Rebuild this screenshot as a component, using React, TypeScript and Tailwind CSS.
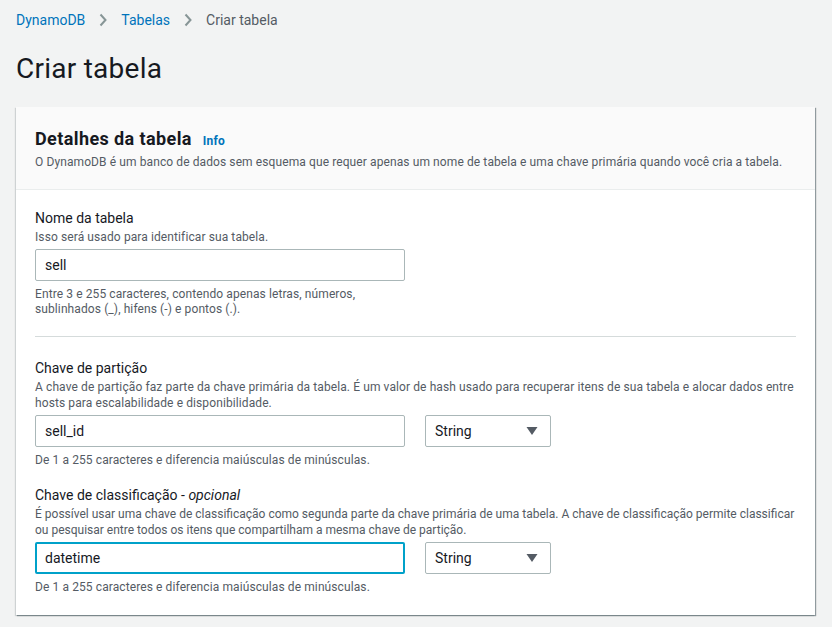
import React from "react";

const Chevron = () => (
  <svg width="8" height="14" viewBox="0 0 8 14" className="mx-[14px]">
    <path d="M1.5 1.5 L6.5 7 L1.5 12.5" fill="none" stroke="#879596" strokeWidth="2" />
  </svg>
);

const Select = () => (
  <div className="w-[126px] h-[32px] border border-[#aab7b8] rounded-[2px] bg-white flex items-center justify-between pl-[9px] pr-[12px] text-[14px] text-[#16191f]">
    <span>String</span>
    <svg width="12" height="10" viewBox="0 0 12 10">
      <path d="M0.5 1 L11.5 1 L6 9 Z" fill="#545b64" />
    </svg>
  </div>
);

export default function App() {
  return (
    <div
      className="min-h-[627px] bg-[#f2f3f3] text-[#16191f] px-[16px] pt-[9px]"
      style={{ fontFamily: 'Roboto, "Noto Sans", Arial, sans-serif' }}
    >
      <div className="flex items-center text-[14px] leading-[22px] h-[22px]">
        <span className="text-[#0073bb]">DynamoDB</span>
        <Chevron />
        <span className="text-[#0073bb]">Tabelas</span>
        <Chevron />
        <span className="text-[#545b64]">Criar tabela</span>
      </div>
      <h1 className="text-[28px] leading-[36px] mt-[20px] text-[#16191f] tracking-[0.25px]">Criar tabela</h1>
      <div className="mt-[20px] w-[799px] bg-white shadow-[1px_1px_1px_0_rgba(0,28,36,0.3),1px_1px_1px_0_rgba(0,28,36,0.15),-1px_1px_1px_0_rgba(0,28,36,0.15)]">
        <div className="bg-[#fafafa] border-b border-[#eaeded] px-[19px] pt-[19px] pb-[19px]">
          <div className="flex items-baseline">
            <span className="text-[18px] leading-[26px] font-bold tracking-[0.4px]">Detalhes da tabela</span>
            <span className="ml-[11px] text-[12px] font-bold text-[#0073bb] tracking-[0.2px]">Info</span>
          </div>
          <div className="text-[12px] leading-[16px] text-[#545b64] mt-[2px] whitespace-nowrap tracking-[0.1px]">
            O DynamoDB é um banco de dados sem esquema que requer apenas um nome de tabela e uma chave primária quando você cria a tabela.
          </div>
        </div>
        <div className="px-[19px] pt-[17px] pb-[20px]">
          <div className="text-[14px] leading-[22px]">Nome da tabela</div>
          <div className="text-[12px] leading-[16px] text-[#545b64] tracking-[0.1px]">Isso será usado para identificar sua tabela.</div>
          <div className="mt-[4px] w-[370px] h-[32px] border border-[#aab7b8] rounded-[2px] flex items-center px-[9px] text-[14px]">sell</div>
          <div className="mt-[6px] text-[12px] leading-[15px] text-[#545b64] tracking-[0.1px]">
            Entre 3 e 255 caracteres, contendo apenas letras, números,
            <br />
            sublinhados (_), hifens (-) e pontos (.).
          </div>
          <div className="mt-[19px] border-t border-[#d5dbdb]" />
          <div className="mt-[20px] text-[14px] leading-[22px]">Chave de partição</div>
          <div className="text-[12px] leading-[16px] text-[#545b64] whitespace-nowrap tracking-[0.1px]">
            A chave de partição faz parte da chave primária da tabela. É um valor de hash usado para recuperar itens de sua tabela e alocar dados entre
            <br />
            hosts para escalabilidade e disponibilidade.
          </div>
          <div className="mt-[4px] flex gap-[20px]">
            <div className="w-[370px] h-[32px] border border-[#aab7b8] rounded-[2px] flex items-center px-[9px] text-[14px]">sell_id</div>
            <Select />
          </div>
          <div className="mt-[5px] text-[12px] leading-[16px] text-[#545b64] tracking-[0.1px]">De 1 a 255 caracteres e diferencia maiúsculas de minúsculas.</div>
          <div className="mt-[16px] text-[14px] leading-[22px]">
            Chave de classificação - <i>opcional</i>
          </div>
          <div className="text-[12px] leading-[16px] text-[#545b64] whitespace-nowrap">
            É possível usar uma chave de classificação como segunda parte da chave primária de uma tabela. A chave de classificação permite classificar
            <br />
            ou pesquisar entre todos os itens que compartilham a mesma chave de partição.
          </div>
          <div className="mt-[4px] flex gap-[20px]">
            <div className="w-[370px] h-[32px] border-2 border-[#00a1c9] rounded-[2px] flex items-center px-[8px] text-[14px]">datetime</div>
            <Select />
          </div>
          <div className="mt-[5px] text-[12px] leading-[16px] text-[#545b64] tracking-[0.1px]">De 1 a 255 caracteres e diferencia maiúsculas de minúsculas.</div>
        </div>
      </div>
    </div>
  );
}
